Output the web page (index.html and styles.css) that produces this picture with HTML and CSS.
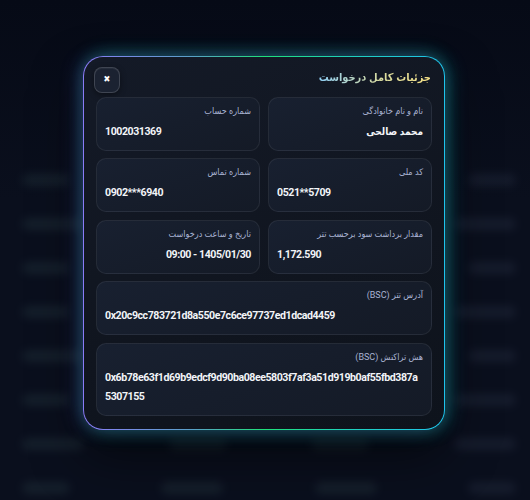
FILE: index.html
```html
<!DOCTYPE html>
<html lang="fa">

<head>
    <meta charset="UTF-8">
    <meta name="viewport" content="width=device-width, initial-scale=1.0">
    <title>جزئیات درخواست</title>
    <link rel="stylesheet" href="styles.css">
</head>

<body>
    <!-- table behind the overlay, blurred -->
    <div class="backdrop">
        <div class="row"><span class="cell w1"></span><span class="cell w3"></span><span class="cell w2"></span><span class="cell w1 r"></span></div>
        <div class="row"><span class="cell w2"></span><span class="cell w2"></span><span class="cell w3"></span><span class="cell w2 r"></span></div>
        <div class="row"><span class="cell w1"></span><span class="cell w3"></span><span class="cell w2"></span><span class="cell w1 r"></span></div>
        <div class="row"><span class="cell w1"></span><span class="cell w2"></span><span class="cell w3"></span><span class="cell w2 r"></span></div>
        <div class="row"><span class="cell w2"></span><span class="cell w3"></span><span class="cell w2"></span><span class="cell w1 r"></span></div>
        <div class="row"><span class="cell w1"></span><span class="cell w2"></span><span class="cell w3"></span><span class="cell w2 r"></span></div>
        <div class="row"><span class="cell w2"></span><span class="cell w3"></span><span class="cell w3"></span><span class="cell w2 r"></span></div>
        <div class="row"><span class="cell w1"></span><span class="cell w2"></span><span class="cell w2"></span><span class="cell w1 r"></span></div>
    </div>

    <div class="modal" dir="rtl">
        <div class="modal-head">
            <h3 class="modal-title">جزئیات کامل درخواست</h3>
            <button class="close-btn" onclick="closeModal()">✖</button>
        </div>

        <div class="details">
            <div class="item">
                <p class="label">نام و نام خانوادگی</p>
                <p class="value fa">محمد صالحی</p>
            </div>
            <div class="item">
                <p class="label">شماره حساب</p>
                <p class="value ltr">1002031369</p>
            </div>
            <div class="item">
                <p class="label">کد ملی</p>
                <p class="value ltr">0521**5709</p>
            </div>
            <div class="item">
                <p class="label">شماره تماس</p>
                <p class="value ltr">0902***6940</p>
            </div>
            <div class="item">
                <p class="label">مقدار برداشت سود برحسب تتر</p>
                <p class="value ltr">1,172.590</p>
            </div>
            <div class="item">
                <p class="label">تاریخ و ساعت درخواست</p>
                <p class="value ltr end">09:00 - 1405/01/30</p>
            </div>
            <div class="item wide">
                <p class="label">آدرس تتر (BSC)</p>
                <p class="value ltr">0x20c9cc783721d8a550e7c6ce97737ed1dcad4459</p>
            </div>
            <div class="item wide">
                <p class="label">هش تراکنش (BSC)</p>
                <p class="value ltr hash">0x6b78e63f1d69b9edcf9d90ba08ee5803f7af3a51d919b0af55fbd387a5307155</p>
            </div>
        </div>
    </div>

    <script>
        function closeModal() {
            document.querySelector('.modal').style.display = 'none';
        }
    </script>
</body>
</html>
```

FILE: styles.css
```css
* {
    margin: 0;
    padding: 0;
    box-sizing: border-box;
    font-family: Roboto, "DejaVu Sans Condensed", "DejaVu Sans", sans-serif;
}

body {
    height: 100vh;
    overflow: hidden;
    background: linear-gradient(180deg, #060a16 0%, #0a0f1d 40%, #0a0f1d 100%);
    position: relative;
}

/* blurred list under the overlay */
.backdrop {
    padding-top: 172px;
    display: flex;
    flex-direction: column;
    gap: 28px;
    filter: blur(5px);
    opacity: 0.7;
}

.row {
    display: flex;
    align-items: center;
    justify-content: space-between;
    padding: 0 14px 0 22px;
    height: 16px;
}

.cell {
    height: 12px;
    border-radius: 6px;
    background: rgba(70, 100, 105, 0.28);
}

.cell.r {
    background: rgba(80, 90, 120, 0.25);
}

.w1 { width: 48px; }
.w2 { width: 62px; }
.w3 { width: 58px; }

.modal {
    position: absolute;
    left: 83px;
    top: 56px;
    width: 362px;
    height: 374px;
    padding: 9.5px 12px 12px;
    border: 1.5px solid transparent;
    border-radius: 20px;
    background:
        linear-gradient(160deg, #141a27 0%, #10151f 60%, #0e131c 100%) padding-box,
        linear-gradient(90deg, #8a7cf8 0%, #5aa0c8 30%, #1fe07a 50%, #1fd0c0 75%, #1fc4ec 100%) border-box;
    box-shadow:
        -6px 0 18px rgba(120, 100, 255, 0.22),
        6px 0 18px rgba(30, 190, 235, 0.22),
        0 -6px 18px rgba(30, 220, 120, 0.14),
        0 6px 18px rgba(30, 220, 120, 0.12),
        0 24px 50px rgba(0, 0, 0, 0.55);
}

.modal-head {
    display: flex;
    align-items: center;
    justify-content: space-between;
    height: 26px;
    margin-bottom: 4px;
}

.modal-title {
    font-size: 11px;
    font-weight: 700;
    background: linear-gradient(270deg, #f3de84 0%, #d9dca0 45%, #8fcdf2 100%);
    -webkit-background-clip: text;
    background-clip: text;
    color: transparent;
    padding-right: 1px;
    margin-top: -4px;
}

.close-btn {
    width: 26px;
    height: 26px;
    margin-left: -2px;
    border-radius: 8px;
    background: #1b2231;
    border: 1px solid rgba(255, 255, 255, 0.16);
    color: #fff;
    font-size: 9px;
    line-height: 1;
    cursor: pointer;
    box-shadow: 0 2px 6px rgba(0, 0, 0, 0.4), inset 0 1px 0 rgba(255, 255, 255, 0.05);
}

.details {
    display: grid;
    grid-template-columns: 1fr 1fr;
    gap: 7.5px 8px;
}

.item {
    background: linear-gradient(160deg, #182030 0%, #141a26 100%);
    border: 1px solid rgba(255, 255, 255, 0.07);
    border-radius: 10px;
    padding: 6px 8px 9px;
}

.item.wide {
    grid-column: 1 / -1;
}

.label {
    font-size: 9px;
    line-height: 14px;
    color: #a9b3d2;
}

.value {
    margin-top: 4px;
    font-size: 10.6px;
    line-height: 19px;
    font-weight: 700;
    color: #f2f4f8;
    letter-spacing: -0.45px;
}

.value.fa {
    font-size: 10px;
    letter-spacing: 0;
}

.value.ltr {
    direction: ltr;
    text-align: left;
}

.value.end {
    text-align: right;
}

.value.hash {
    word-break: break-all;
}
```
